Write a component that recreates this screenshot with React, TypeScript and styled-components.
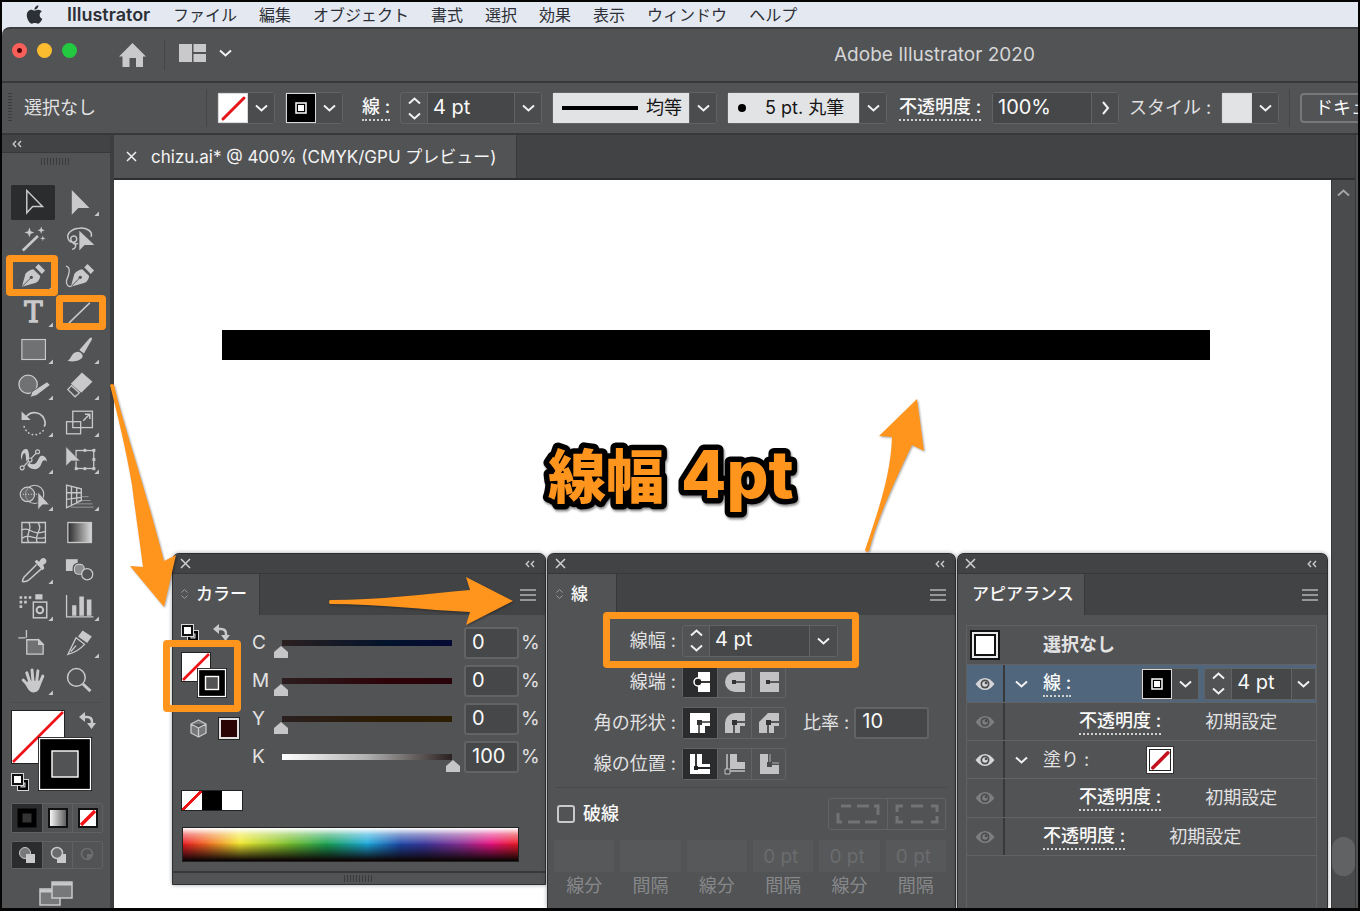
import React from "react";
import styled, { createGlobalStyle } from "styled-components";
import { FaApple } from "react-icons/fa";

const c = {
  base: "#525355",
  dark: "#424345",
  line: "#37383a",
  edge: "#626365",
  field: "#464749",
  icon: "#c9c9cb",
  text: "#e2e2e3",
  white: "#fafafa",
  orange: "#ff951d",
  pressed: "#2b2c2e",
};

const ui = '"Inter", "Noto Sans CJK JP", sans-serif';

const GlobalStyle = createGlobalStyle`
  * { box-sizing: border-box; }
  body { margin: 0; background: #050505; }
  button, input, select { font: inherit; color: inherit; margin: 0; padding: 0; border: 0; background: none; border-radius: 0; }
  svg { display: block; flex: none; }
  ul { list-style: none; margin: 0; padding: 0; }
`;

/* ---------- frame, menu bar and title bar ---------- */

const Frame = styled.div`
  min-height: 100vh;
  border: 2px solid #050505;
  border-bottom-width: 3px;
  display: flex;
  flex-direction: column;
  position: relative;
  overflow: hidden;
  background: #e4e9f1;
  font-family: ${ui};
  font-size: 18px;
  line-height: 24px;
  color: ${c.text};
`;

const MenuBar = styled.nav`
  height: 25px;
  flex: none;
  display: flex;
  align-items: center;
  gap: 22px;
  padding-left: 22px;
  color: #2c2f36;
  font-size: 16px;
  line-height: 24px;
  white-space: nowrap;
`;

const MenuItem = styled.button`
  flex: none;
`;

const AppName = styled.button`
  flex: none;
  width: 84px;
  text-align: left;
  font-size: 18px;
  font-weight: 600;
`;

const AppWindow = styled.div`
  flex: 1;
  display: flex;
  flex-direction: column;
  min-width: 0;
  background: ${c.base};
  border-top: 2px solid #3b3d40;
  border-radius: 8px 0 0 0;
`;

const TitleBar = styled.header`
  height: 54px;
  flex: none;
  display: flex;
  align-items: center;
  border-bottom: 2px solid ${c.line};
  padding-left: 10px;
  overflow: hidden;
`;

const Lights = styled.div`
  display: flex;
  gap: 10px;
  margin-bottom: 10px;
`;

const Light = styled.button<{ $color: string; $dot?: boolean }>`
  width: 15px;
  height: 15px;
  border-radius: 50%;
  background: ${(p) => (p.$dot ? `radial-gradient(circle, #4d0505 2px, ${p.$color} 3px)` : p.$color)};
`;

const HomeButton = styled.button`
  margin-left: 42px;
`;

const BarDivider = styled.span<{ $h: number }>`
  flex: none;
  width: 1px;
  height: ${(p) => p.$h}px;
  background: #444547;
`;

const LayoutButton = styled.button`
  display: flex;
  align-items: center;
  gap: 13px;
  margin: 0 0 4px 14px;
`;

const AppTitle = styled.h1`
  margin: 0 0 0 602px;
  font-size: 19px;
  line-height: 24px;
  font-weight: 400;
  color: #d6d6d7;
  white-space: nowrap;
`;

/* ---------- control bar ---------- */

const ControlBar = styled.div`
  height: 52px;
  flex: none;
  display: flex;
  align-items: center;
  gap: 10px;
  padding-left: 6px;
  border-bottom: 2px solid ${c.line};
  overflow: hidden;
  white-space: nowrap;
  & > * { flex: none; }
`;

const Selection = styled.span`
  width: 174px;
  padding-left: 2px;
`;

const SideGrip = styled.span`
  width: 4px;
  height: 30px;
  background: repeating-linear-gradient(to bottom, #3a3b3d 0 1px, transparent 1px 3px);
`;

const Label = styled.label<{ $w?: number; $pad?: number; $link?: boolean }>`
  width: ${(p) => (p.$w ? `${p.$w}px` : "auto")};
  padding-left: ${(p) => p.$pad ?? 0}px;
  font-weight: ${(p) => (p.$link ? 500 : 400)};
  color: ${(p) => (p.$link ? c.white : c.text)};
`;

const Dotted = styled.span`
  display: inline-block;
  border-bottom: 2px dotted #d0d0d1;
  white-space: nowrap;
  line-height: 24px;
  font-weight: 500;
  color: ${c.white};
`;

const Group = styled.div<{ $bare?: boolean }>`
  display: flex;
  height: 32px;
  border: 1px solid ${(p) => (p.$bare ? "transparent" : c.edge)};
  border-radius: 3px;
  background: ${c.base};
  & > * + * { border-left: 1px solid ${c.edge}; }
`;

const StepColumn = styled.div`
  width: 26px;
  display: flex;
  flex-direction: column;
`;

const StepButton = styled.button`
  flex: 1;
  display: grid;
  place-items: center;
`;

const ValueInput = styled.input<{ $w: number; $pad?: number }>`
  width: ${(p) => p.$w}px;
  padding: 0 0 3px ${(p) => p.$pad ?? 5}px;
  background: ${c.field};
  color: ${c.white};
  font-size: 20px;
  outline: 0;
`;

const BoxInput = styled(ValueInput)`
  height: 32px;
  border: 2px solid ${c.edge};
  border-radius: 3px;
`;

const Arrow = styled.button<{ $w?: number }>`
  width: ${(p) => p.$w ?? 28}px;
  display: grid;
  place-items: center;
  background: #4b4c4e;
`;

const SwatchGroup = styled.div`
  display: flex;
  height: 32px;
  border: 1px solid ${c.edge};
  border-radius: 3px;
`;

const Swatch = styled.button<{ $color: string }>`
  width: 30px;
  height: 30px;
  display: grid;
  place-items: center;
  border: 1px solid #d8d8da;
  background: ${(p) => p.$color};
`;

const LightField = styled.div<{ $w: number }>`
  width: ${(p) => p.$w}px;
  display: flex;
  align-items: center;
  background: #e2e3e5;
  color: #161616;
  padding-left: 9px;
`;

const PlainSelect = styled.select<{ $pad: number }>`
  appearance: none;
  flex: 1;
  min-width: 0;
  height: 30px;
  padding-left: ${(p) => p.$pad}px;
  outline: 0;
`;

const SetupButton = styled.button`
  height: 30px;
  width: 170px;
  padding-left: 13px;
  text-align: left;
  border: 2px solid #77787a;
  border-radius: 4px;
  color: ${c.white};
`;

/* ---------- work area ---------- */

const Workspace = styled.div`
  flex: 1;
  display: flex;
  min-height: 0;
`;

const ToolBar = styled.aside`
  width: 112px;
  flex: none;
  border-right: 4px solid #3d3e40;
  display: flex;
  flex-direction: column;
  align-items: flex-start;
`;

const ToolHead = styled.div`
  align-self: stretch;
  height: 18px;
  display: flex;
  align-items: center;
  padding-left: 10px;
  background: ${c.dark};
  border-bottom: 1px solid ${c.line};
`;

const Grip = styled.span`
  width: 30px;
  height: 7px;
  background: repeating-linear-gradient(to right, #3a3b3d 0 1px, transparent 1px 3px);
`;

const ToolGrip = styled.div`
  padding: 5px 0 19px 39px;
  display: flex;
`;

const ToolGrid = styled.div`
  margin-left: 8px;
  height: 515px;
  display: grid;
  grid-template-columns: 46px 46px;
  grid-template-rows: repeat(14, 1fr);
`;

const Tool = styled.button<{ $active?: boolean }>`
  position: relative;
  width: 46px;
  min-height: 0;
  border-radius: 5px;
  background: ${(p) => (p.$active ? `linear-gradient(${c.pressed}, ${c.pressed}) center / 44px 35px no-repeat` : "none")};
`;

const Highlight = styled.span<{ $inset: string }>`
  position: absolute;
  inset: ${(p) => p.$inset};
  border: 7px solid ${c.orange};
  border-radius: 4px;
  pointer-events: none;
`;

const ToolRule = styled.div`
  width: 92px;
  height: 1px;
  margin: 3px 0 7px 8px;
  background: #4b4c4e;
`;

const ToolSwatches = styled.div`
  margin-left: 9px;
  height: 82px;
`;

const ModeGroup = styled.div<{ $h: number; $mt: number }>`
  margin: ${(p) => p.$mt}px 0 0 9px;
  display: flex;
  height: ${(p) => p.$h}px;
  border: 1px solid #606163;
  border-radius: 2px;
  & > * + * { border-left: 1px solid #606163; }
`;

const ModeButton = styled.button<{ $active?: boolean }>`
  width: 30px;
  display: grid;
  place-items: center;
  background: ${(p) => (p.$active ? c.pressed : "none")};
`;

const ScreenMode = styled.button`
  margin: 12px 0 0 37px;
`;

const DocumentArea = styled.main`
  flex: 1;
  min-width: 0;
  display: flex;
  flex-direction: column;
`;

const TabStrip = styled.div`
  height: 45px;
  flex: none;
  display: flex;
  background: ${c.dark};
  border-bottom: 2px solid #2d2e30;
`;

const DocTab = styled.div`
  width: 403px;
  display: flex;
  align-items: center;
  gap: 14px;
  padding-left: 12px;
  background: ${c.base};
  border-right: 1px solid ${c.line};
  color: #f4f4f4;
  font-size: 17px;
  white-space: nowrap;
`;

const CanvasRow = styled.div`
  flex: 1;
  display: flex;
  min-height: 0;
`;

const Canvas = styled.div`
  flex: 1;
  min-width: 0;
  position: relative;
  overflow: hidden;
  background: #fff;
`;

const StrokeSample = styled.div`
  height: 30px;
  margin: 150px 121px 0 108px;
  background: #000;
`;

/* Lettering with a heavy rounded outline. */
const Caption = styled.svg`
  margin: 74px 0 0 424px;
  font-weight: 900;
  fill: ${c.orange};
  stroke: #000;
  stroke-width: 11px;
  stroke-linejoin: round;
  paint-order: stroke fill;
  filter: drop-shadow(1px 2px 1px rgba(0, 0, 0, 0.45));
`;

const ScrollTrack = styled.div`
  width: 24px;
  flex: none;
  background: #4a4b4d;
  border-left: 1px solid ${c.line};
  display: flex;
  flex-direction: column;
  justify-content: space-between;
  align-items: center;
  padding: 9px 0 32px;
`;

const ScrollThumb = styled.div`
  width: 23px;
  height: 39px;
  border-radius: 12px;
  background: #616264;
`;

const RightEdge = styled.div`
  width: 3px;
  flex: none;
  background: ${c.base};
  border-left: 1px solid ${c.line};
`;

/* ---------- floating panels ---------- */

const PanelDock = styled.div`
  position: absolute;
  left: 58px;
  top: 373px;
  bottom: 0;
  display: flex;
  gap: 1px;
`;

const PanelFrame = styled.section<{ $w: number; $h?: number }>`
  width: ${(p) => p.$w}px;
  height: ${(p) => (p.$h ? `${p.$h}px` : "auto")};
  display: flex;
  flex-direction: column;
  border: 1px solid #2e2f31;
  border-bottom-width: ${(p) => (p.$h ? 1 : 0)}px;
  border-radius: 7px 7px 0 0;
  background: ${c.base};
  box-shadow: 0 0 4px rgba(0, 0, 0, 0.35);
`;

const PanelHead = styled.div`
  height: 20px;
  flex: none;
  display: flex;
  align-items: center;
  justify-content: space-between;
  padding: 0 10px 0 7px;
  background: ${c.dark};
  border-bottom: 1px solid ${c.line};
  border-radius: 6px 6px 0 0;
`;

const PanelTabs = styled.div`
  height: 41px;
  flex: none;
  display: flex;
  justify-content: space-between;
  background: ${c.dark};
  padding-right: 9px;
`;

const PanelTab = styled.button<{ $w: number }>`
  width: ${(p) => p.$w}px;
  display: flex;
  align-items: center;
  gap: 7px;
  padding: 0 0 2px 7px;
  background: ${c.base};
  border-right: 1px solid ${c.line};
  color: ${c.white};
  font-size: 17px;
  font-weight: 500;
  white-space: nowrap;
`;

const MenuButton = styled.button`
  align-self: center;
`;

function Panel(p: { w: number; h?: number; title: string; tab: number; spinner?: boolean; children: React.ReactNode }) {
  return (
    <PanelFrame $w={p.w} $h={p.h} aria-label={p.title}>
      <PanelHead>
        <button aria-label="閉じる"><Cross size={11} color="#cfcfd0" /></button>
        <button aria-label="折りたたむ"><Collapse /></button>
      </PanelHead>
      <PanelTabs>
        <PanelTab $w={p.tab}>
          {p.spinner ? (
            <svg width="9" height="12" viewBox="0 0 9 12" fill="none" stroke="#9b9b9d">
              <path d="M1.5 4.5 4.5 1.5 7.5 4.5M1.5 7.5l3 3 3-3" />
            </svg>
          ) : <span />}
          {p.title}
        </PanelTab>
        <MenuButton aria-label="メニュー">
          <svg width="16" height="12" stroke="#b4b4b6" strokeWidth="1.5"><path d="M0 1h16M0 6h16M0 11h16" /></svg>
        </MenuButton>
      </PanelTabs>
      {p.children}
    </PanelFrame>
  );
}

/* Colour panel */

const ColorBody = styled.div`
  position: relative;
  flex: 1;
  padding: 9px 0 0 8px;
`;

const ColorTop = styled.div`
  display: flex;
`;

const ColorSide = styled.div`
  width: 71px;
  flex: none;
`;

const IconPair = styled.div<{ $h: number; $mt: number; $gap: number; $pad: number }>`
  display: flex;
  align-items: center;
  height: ${(p) => p.$h}px;
  margin-top: ${(p) => p.$mt}px;
  gap: ${(p) => p.$gap}px;
  padding-left: ${(p) => p.$pad}px;
`;

const Proxy = styled.div`
  position: relative;
  width: 46px;
  height: 46px;
  margin-top: 11px;
`;

const Gamut = styled.button`
  width: 20px;
  height: 21px;
  background: #2a0304;
  border: 2px solid #e0e0e0;
  outline: 1px solid #222;
`;

const Channel = styled.div`
  height: 38px;
  display: grid;
  grid-template-columns: 22px 186px 54px 18px;
  column-gap: 0;
  align-items: center;
  font-size: 19px;
`;

const ChannelInput = styled(BoxInput)`
  margin-left: 4px;
  width: 55px;
`;

const Percent = styled.span`
  margin-left: 7px;
`;

const Range = styled.input<{ $track: string }>`
  appearance: none;
  align-self: start;
  width: 186px;
  height: 19px;
  margin-top: 15px;
  background: linear-gradient(to right, ${(p) => p.$track}) no-repeat 8px 1px / 170px 6px;
  outline: 0;
  &::-webkit-slider-runnable-track { height: 19px; }
  &::-webkit-slider-thumb {
    appearance: none;
    width: 14px;
    height: 12px;
    margin-top: 7px;
    background: #c6c6c8;
    clip-path: polygon(50% 0, 100% 50%, 100% 100%, 0 100%, 0 50%);
  }
`;

const QuickColors = styled.div`
  margin-top: 14px;
  width: 62px;
  height: 21px;
  display: flex;
  border: 1px solid #222;
`;

const Quick = styled.button<{ $bg: string }>`
  flex: 1;
  background: ${(p) => p.$bg};
`;

const noneFill = "linear-gradient(to bottom right, #fff 45%, #e11 45%, #e11 55%, #fff 55%)";

const Spectrum = styled.div`
  margin: 16px 0 0 1px;
  width: 337px;
  height: 35px;
  border: 1px solid #222;
  background:
    linear-gradient(to bottom, #fff 0%, rgba(255, 255, 255, 0.45) 20%, transparent 50%),
    linear-gradient(to top, #0d0505 2%, rgba(10, 5, 10, 0.5) 28%, transparent 55%),
    linear-gradient(to right, #ea1a24 0%, #f26a22 7%, #f2e82e 17%, #74bd2c 32%, #1aa254 43%, #1ca9dc 55%, #1f48a8 65%, #3a379c 72%, #8b2f95 83%, #e8127f 92%, #ea1a2c 99%);
`;

const PanelFoot = styled.div`
  height: 13px;
  flex: none;
  display: grid;
  place-items: center;
  border-top: 2px solid ${c.line};
`;

const channels = [
  { name: "C", value: 0, track: "#2b201f, #03132b 60%, #040a33" },
  { name: "M", value: 0, track: "#2b1d1e, #2d0308 60%, #29030a" },
  { name: "Y", value: 0, track: "#2b1f1f, #2b1c03 60%, #2b1e03" },
  { name: "K", value: 100, track: "#ffffff, #b0b0b0 50%, #2a2120" },
];

/* Stroke panel */

const StrokeRow = styled.div`
  height: 41px;
  display: flex;
  align-items: center;
  &:first-child { margin-top: 5px; }
`;

const RowLabel = styled.span`
  width: 128px;
  margin-right: 6px;
  text-align: right;
  white-space: nowrap;
`;

const Highlighted = styled.div`
  position: absolute;
  left: 55px;
  top: -3px;
  width: 256px;
  height: 56px;
  border: 7px solid ${c.orange};
  border-radius: 4px;
  pointer-events: none;
`;

const StrokeBody = styled.div`
  position: relative;
  display: flex;
  flex-direction: column;
`;

const Choice = styled.button<{ $active?: boolean }>`
  width: 34px;
  display: grid;
  place-items: center;
  color: ${(p) => (p.$active ? "#fff" : "#c2c2c4")};
  background: ${(p) => (p.$active ? c.pressed : "none")};
`;

const Ratio = styled.label`
  display: flex;
  align-items: center;
  gap: 5px;
  margin-left: 17px;
  white-space: nowrap;
`;

const Rule = styled.div`
  height: 1px;
  margin: 3px 8px 0;
  background: #48494b;
`;

const DashHead = styled.div`
  display: flex;
  align-items: center;
  justify-content: space-between;
  margin-top: 10px;
  padding: 0 9px;
`;

const CheckLabel = styled.label`
  display: flex;
  align-items: center;
  gap: 8px;
  color: ${c.white};
  font-weight: 500;
`;

const Check = styled.input`
  appearance: none;
  width: 18px;
  height: 18px;
  border: 2px solid #c9c9cb;
  border-radius: 3px;
`;

const DashButton = styled.button`
  width: 58px;
  display: grid;
  place-items: center;
`;

const DashGrid = styled.div`
  display: grid;
  grid-template-columns: repeat(6, 1fr);
  gap: 6px;
  padding: 10px 9px 0 6px;
`;

const DashField = styled.label`
  display: flex;
  flex-direction: column;
  align-items: center;
  gap: 2px;
  color: #87888a;
`;

const DashInput = styled.input`
  width: 100%;
  height: 32px;
  padding-right: 15px;
  text-align: right;
  background: #57585a;
  color: #6b6c6e;
  font-size: 19px;
`;

/* Appearance panel */

const AppearanceList = styled.ul`
  flex: 1;
  margin: 10px 10px 0 8px;
  border: 1px solid #606163;
  border-bottom: 0;
`;

const AppearanceRow = styled.li<{ $selected?: boolean; $tall?: boolean }>`
  height: ${(p) => (p.$tall ? 39 : 38)}px;
  display: flex;
  align-items: center;
  border-bottom: 1px solid #626365;
  background: ${(p) => (p.$selected ? "#4f667d" : "none")};
  white-space: nowrap;
  overflow: hidden;
  & > * { flex: none; }
`;

const EyeCell = styled.button<{ $dim?: boolean }>`
  width: 38px;
  height: 100%;
  display: grid;
  place-items: center;
  border-right: 2px solid #38393b;
  color: ${(p) => (p.$dim ? "#7d7e80" : "#d6d6d8")};
`;

const ThumbCell = styled.span`
  width: 38px;
  padding-left: 3px;
`;

const ThumbBox = styled.span`
  display: block;
  width: 30px;
  height: 30px;
  background: #fff;
  border: 2px solid #111;
  box-shadow: inset 0 0 0 2px #e8e8e8, inset 0 0 0 4px #111;
`;

const Indent = styled.span<{ $w: number }>`
  width: ${(p) => p.$w}px;
`;

const Strong = styled.span`
  margin-left: 38px;
  font-weight: 700;
`;

const Twist = styled.button`
  width: 38px;
  padding-left: 10px;
`;

const Inline = styled.div<{ $ml: number }>`
  display: flex;
  margin-left: ${(p) => p.$ml}px;
`;

const NoneBox = styled.button`
  width: 26px;
  height: 26px;
  display: grid;
  place-items: center;
  background: #fff;
  border: 2px solid #fff;
  outline: 1px solid #333;
  box-shadow: inset 0 0 0 1px #222;
`;

const Value = styled.span<{ $ml: number }>`
  margin-left: ${(p) => p.$ml}px;
`;

const ArrowMark = styled.svg<{ $x: number; $y: number }>`
  position: absolute;
  left: ${(p) => p.$x}px;
  top: ${(p) => p.$y}px;
  overflow: visible;
  pointer-events: none;
  fill: ${c.orange};
  filter: drop-shadow(1px 1px 1px rgba(0, 0, 0, 0.35));
`;

const ColorHighlight = styled.div`
  position: absolute;
  left: -10px;
  top: 25px;
  width: 78px;
  height: 72px;
  border: 7px solid ${c.orange};
  border-radius: 4px;
  pointer-events: none;
`;

/* ---------- small drawings ---------- */

function Chevron({ dir = "down", color = "#f2f2f2" }: { dir?: "down" | "up" | "right"; color?: string }) {
  const d = { down: "M1 1.5 6.5 6.5 12 1.5", up: "M1 6.5 6.5 1.5 12 6.5", right: "M4 -2 9 4 4 10" }[dir];
  return (
    <svg width="13" height="8" viewBox="0 0 13 8" fill="none" stroke={color} strokeWidth="2" overflow="visible">
      <path d={d} />
    </svg>
  );
}

function Cross({ size, color }: { size: number; color: string }) {
  return (
    <svg width={size} height={size} viewBox="0 0 11 11" stroke={color} strokeWidth="1.5">
      <path d="M1 1 10 10M10 1 1 10" />
    </svg>
  );
}

function Collapse() {
  return (
    <svg width="10" height="8" viewBox="0 0 10 8" fill="none" stroke="#c9c9cb" strokeWidth="1.4">
      <path d="M4 1 1.200 4 4 7M9 1 6.200 4 9 7" />
    </svg>
  );
}

function NoneMark({ size = 28, color = "#e5141b", width = 3 }: { size?: number; color?: string; width?: number }) {
  return (
    <svg width={size} height={size} viewBox="0 0 28 28" stroke={color} strokeWidth={width} strokeLinecap="round">
      <path d="M4 25 25 4" />
    </svg>
  );
}

function TargetMark() {
  return (
    <svg width="12" height="12" viewBox="0 0 12 12">
      <rect x="1" y="1" width="10" height="10" fill="#000" stroke="#fff" strokeWidth="1.5" />
      <rect x="3" y="3" width="6" height="6" fill="#fff" />
    </svg>
  );
}

function DefaultIcon() {
  return (
    <svg width="18" height="18" viewBox="0 0 18 18">
      <rect x="6.500" y="6.500" width="11" height="11" fill="#000" stroke="#d6d6d8" />
      <rect x="10" y="10" width="4" height="4" fill={c.base} stroke="#d6d6d8" />
      <rect x="0.500" y="0.500" width="12" height="12" fill="#fff" stroke="#d6d6d8" />
      <rect x="2" y="2" width="9" height="9" fill="#fff" stroke="#111" strokeWidth="2" />
    </svg>
  );
}

function SwapIcon() {
  return (
    <svg width="17" height="17" viewBox="0 0 17 17">
      <path d="M4 5h4q5 0 5 5v2" fill="none" stroke={c.icon} strokeWidth="2.500" />
      <path d="M0 5 6 0v10zM8 11h9l-4.500 6z" fill={c.icon} />
    </svg>
  );
}

function FillStroke({ size, box, offset }: { size: number; box: number; offset: number }) {
  const inner = box > 40 ? 26 : 13;
  const o = offset + (box - inner) / 2;
  return (
    <svg width={size} height={size} viewBox={`0 0 ${size} ${size}`}>
      <rect x="0.500" y="0.500" width={box - 1} height={box - 1} fill="#fff" stroke="#222" />
      <path d={`M2 ${box - 2} ${box - 2} 2`} stroke="#f01216" strokeWidth="2.600" />
      <rect x={offset} y={offset} width={box} height={box} fill="#111" />
      <rect x={offset + 1.5} y={offset + 1.5} width={box - 3} height={box - 3} fill="#000" stroke="#fff" strokeWidth="1.300" />
      <rect x={o} y={o} width={inner} height={inner} fill={c.base} stroke="#fff" strokeWidth="1.400" />
    </svg>
  );
}

function Eye() {
  return (
    <svg width="20" height="14" viewBox="0 0 20 14">
      <path d="M0.500 7Q5 1 10 1t9.500 6Q15 13 10 13T0.500 7Z" fill="currentColor" />
      <circle cx="10" cy="7" r="4.500" fill="#4b4c4e" />
      <circle cx="10" cy="7" r="2.800" fill="currentColor" />
      <circle cx="11" cy="6" r="1.300" fill="#4b4c4e" />
    </svg>
  );
}

const corner = <path d="M130 84v14h-14z" fill={c.icon} stroke="none" />;
const nib = (
  <g>
    <path d="M35 88 46 48Q56 36 70 34L91 55Q90 68 78 76Z" fill={c.icon} stroke="none" />
    <path d="M76 28 86 18 106 38 96 49Z" fill={c.icon} stroke="none" />
    <path d="M36 87 62 61" stroke={c.base} strokeWidth="3" />
    <circle cx="64" cy="59" r="5" fill={c.base} stroke="none" />
  </g>
);

/* Each tool is drawn on a 138 x 110 grid. */
const tools: { name: string; art: React.ReactNode; mark?: string; active?: boolean }[] = [
  { name: "選択", active: true, art: <path d="M50 20v68l18-19h30z" strokeWidth="4.500" /> },
  { name: "ダイレクト選択", art: <><path d="M47 18v76l20-21h34z" fill={c.icon} stroke="none" />{corner}</> },
  {
    name: "自動選択",
    art: (
      <>
        <path d="M38 90 84 46" strokeWidth="8" />
        <g fill={c.icon} stroke="none">
          <path d="M58 20l4 11 11 4-11 4-4 11-4-11-11-4 11-4z" />
          <path d="M94 17l3 8 8 3-8 3-3 8-3-8-8-3 8-3z" />
          <path d="M99 44l2 7 7 2-7 2-2 7-2-7-7-2 7-2z" />
        </g>
      </>
    ),
  },
  {
    name: "なげなわ",
    art: (
      <>
        <path d="M106 48C112 30 90 20 70 22 46 23 30 40 36 54c6 16 26 12 26 0s-20-10-18 2 14 18 22 12M56 66c6 10 2 20-8 20" strokeWidth="4.500" />
        <path d="M70 30v60l16-17h30z" fill={c.icon} stroke="none" />
      </>
    ),
  },
  { name: "ペン", mark: "-3px -2px -2px -4px", art: <>{nib}{corner}</> },
  { name: "曲線", art: <><g transform="translate(9 0)">{nib}</g><path d="M29 25C46 28 38 52 31 68c-3 14 6 22 15 18" strokeWidth="4" /></> },
  {
    name: "文字",
    art: (
      <>
        <text x="70" y="84" textAnchor="middle" fontFamily="DejaVu Serif, serif" fontSize="84" fill={c.icon} strokeWidth="4">T</text>
        {corner}
      </>
    ),
  },
  { name: "直線", mark: "1px -4px 1px 0", art: <path d="M38 86 102 24" strokeWidth="4.500" /> },
  { name: "長方形", art: <><rect x="35" y="23" width="72" height="61" fill="#707173" />{corner}</> },
  {
    name: "ブラシ",
    art: (
      <g fill={c.icon} stroke="none">
        <path d="M102 18q9-4 6 6L84 66 70 55Z" />
        <path d="M66 60q16 4 14 16c-6 14-30 16-46 12 14-8 10-26 32-28Z" />
        {corner}
      </g>
    ),
  },
  {
    name: "Shaper",
    art: (
      <>
        <circle cx="54" cy="50" r="28" fill="#707173" strokeWidth="4" />
        <path d="M112 42l10 10-42 32-20 6 6-18z" fill={c.icon} stroke={c.base} strokeWidth="3" />
        {corner}
      </>
    ),
  },
  {
    name: "消しゴム",
    art: (
      <>
        <path d="M78 14 110 42 76 76 44 48Z" fill={c.icon} stroke="none" />
        <path d="M46 54 35 66 57 88 70 76Z" strokeWidth="4" />
        {corner}
      </>
    ),
  },
  {
    name: "回転",
    art: (
      <>
        <path d="M48 36C66 14 100 22 106 52q1 8-3 14" strokeWidth="5" />
        <path d="M42 66C50 94 84 100 102 76" strokeWidth="5" strokeDasharray="1 11" strokeLinecap="round" />
        <path d="M34 20v26h28z" fill={c.icon} stroke="none" />
        {corner}
      </>
    ),
  },
  {
    name: "拡大・縮小",
    art: (
      <>
        <rect x="50" y="19" width="60" height="50" strokeWidth="4" />
        <rect x="31" y="51" width="43" height="37" fill={c.base} strokeWidth="4" />
        <path d="M50 51v18h24" strokeWidth="4" />
        <path d="M82 48 100 30M87 28h15v15" strokeWidth="4.500" />
        {corner}
      </>
    ),
  },
  {
    name: "線幅",
    art: (
      <>
        <path d="M34 56C26 26 48 14 54 26c8 20-4 42 14 42 18 0 16-26 28-26 10 0 14 8 16 18-8-8-14-4-18 8-6 18-24 18-36 10C44 66 50 38 44 34c-6 0-8 8-10 22Z" fill={c.icon} stroke="none" />
        <path d="M36 79 82 31" stroke={c.base} strokeWidth="9" />
        <path d="M36 79 82 31" strokeWidth="4" />
        <g fill={c.base}>
          <circle cx="36" cy="79" r="6" /><circle cx="60" cy="55" r="6" /><circle cx="83" cy="30" r="6" />
        </g>
        {corner}
      </>
    ),
  },
  {
    name: "自由変形",
    art: (
      <>
        <rect x="60" y="26" width="54" height="55" strokeWidth="4" />
        <g fill={c.icon} stroke="none">
          <rect x="83" y="21" width="8" height="9" /><rect x="110" y="21" width="9" height="9" />
          <rect x="110" y="49" width="9" height="9" /><rect x="110" y="77" width="9" height="9" />
          <rect x="83" y="77" width="8" height="9" /><rect x="56" y="77" width="9" height="9" />
        </g>
        <path d="M29 14v60l16-16h28z" fill={c.icon} stroke={c.base} strokeWidth="2" />
        {corner}
      </>
    ),
  },
  {
    name: "シェイプ形成",
    art: (
      <>
        <circle cx="74" cy="47" r="28" />
        <circle cx="52" cy="47" r="22" fill="#707173" fillOpacity="0.600" />
        <path d="M38 47h44" strokeDasharray="3 5" />
        <path d="M84 40v54l14-15h21z" fill={c.icon} stroke={c.base} strokeWidth="2" />
        {corner}
      </>
    ),
  },
  {
    name: "遠近グリッド",
    art: (
      <>
        <path d="M31 19 76 30v36L31 88ZM46 23v56M62 27v46M31 42l45 0M31 62l45-6" strokeWidth="4" />
        <path d="M78 54h20M66 66h38M56 76h54M44 86h70" strokeWidth="2.500" opacity="0.700" />
        {corner}
      </>
    ),
  },
  {
    name: "メッシュ",
    art: (
      <path d="M35 23h72v61H35zM35 46c22-14 30 20 72 4M35 72c24-20 34 8 72-4M56 23c14 20-14 38 0 61M84 23c18 22-14 36-2 61" strokeWidth="4" />
    ),
  },
  {
    name: "グラデーション",
    art: (
      <>
        <defs><linearGradient id="toolGradient"><stop offset="0" stopColor="#2b2b2b" /><stop offset="1" stopColor="#d9d9d9" /></linearGradient></defs>
        <rect x="35" y="23" width="72" height="61" fill="url(#toolGradient)" strokeWidth="4" />
      </>
    ),
  },
  {
    name: "スポイト",
    art: (
      <>
        <path d="M80 38 42 76q-8 14-3 15 12 0 18-6L96 50" strokeWidth="4.500" />
        <path d="M74 30l6-6 8 6c4-10 14-16 20-8 6 8-2 14-8 18l4 10-6 6z" fill={c.icon} stroke="none" />
        {corner}
      </>
    ),
  },
  {
    name: "ブレンド",
    art: (
      <>
        <rect x="29" y="22" width="36" height="36" fill={c.icon} stroke="none" />
        <rect x="53" y="36" width="34" height="34" rx="13" fill="#8c8d8f" stroke={c.base} strokeWidth="7" />
        <rect x="55" y="38" width="30" height="30" rx="12" fill="#8c8d8f" />
        <circle cx="94" cy="68" r="17" fill={c.base} strokeWidth="4" />
      </>
    ),
  },
  {
    name: "シンボルスプレー",
    art: (
      <>
        <g fill={c.icon} stroke="none">
          <path d="M28 22h8v8h-8zM42 22h8v8h-8zM56 22h8v8h-8zM28 36h8v8h-8zM42 36h8v8h-8zM28 50h8v8h-8z" />
          <path d="M76 16h22v16H76z" />
        </g>
        <rect x="70" y="40" width="41" height="48" strokeWidth="4.500" />
        <circle cx="90" cy="64" r="10" strokeWidth="6" />
        {corner}
      </>
    ),
  },
  {
    name: "棒グラフ",
    art: (
      <>
        <path d="M31 18v67h82" strokeWidth="4" />
        <path d="M48 50h13v32H48zM70 23h14v59H70zM93 32h14v50H93z" fill={c.icon} stroke="none" />
        {corner}
      </>
    ),
  },
  {
    name: "アートボード",
    art: (
      <>
        <path d="M50 42h36l14 14v30H50z" fill="#707173" strokeWidth="4" />
        <path d="M86 42v14h14z" fill={c.icon} />
        <path d="M49 12v24M24 36h22" strokeWidth="4" />
      </>
    ),
  },
  {
    name: "スライス",
    art: (
      <>
        <path d="M35 87 60 36 86 56Q66 78 35 87ZM44 78 60 60" strokeWidth="4" />
        <path d="M80 14l28 18-14 20-28-20z" fill={c.icon} stroke="none" />
        {corner}
      </>
    ),
  },
  {
    name: "手のひら",
    art: (
      <>
        <path d="M39 52 56 70M50 30 60 60M66 21 69 58M84 24 80 58M99 40 88 66" strokeWidth="9" strokeLinecap="round" />
        <path d="M54 54h36l2 14c-4 16-10 22-22 22S54 80 46 66Z" fill={c.icon} stroke="none" />
        {corner}
      </>
    ),
  },
  {
    name: "ズーム",
    art: <><circle cx="61" cy="44" r="27" strokeWidth="4.500" /><path d="M81 64 104 86" strokeWidth="9" /></>,
  },
];

const capIcons = [
  <><path d="M10 1h12v20H10z" fill="currentColor" /><circle cx="10" cy="11" r="4" fill="#222" stroke="currentColor" strokeWidth="1.500" /><path d="M8 11h14" stroke="#222" strokeWidth="1.800" /><path d="M8 9h4v4H8z" fill="#222" /></>,
  <><path d="M22 1v20H12a10 10 0 0 1 0-20z" fill="currentColor" /><path d="M11 11h11" stroke="#333" strokeWidth="1.500" /><path d="M9 9h4v4H9z" fill="#333" /></>,
  <><path d="M3 1h19v20H3z" fill="currentColor" /><path d="M11 11h11" stroke="#333" strokeWidth="1.500" /><path d="M9 9h4v4H9z" fill="#333" /></>,
];

const joinInner = (
  <>
    <path d="M11 21V10h11" stroke="#333" strokeWidth="1.500" fill="none" />
    <path d="M9 8h5v5H9z" fill="#333" />
  </>
);
const joinIcons = [
  <><path d="M2 1h20v13h-5v7H2z" fill="currentColor" />{joinInner}</>,
  <><path d="M12 1h10v13h-5v7H2V11A10 10 0 0 1 12 1z" fill="currentColor" />{joinInner}</>,
  <><path d="M11 1h11v13h-5v7H2V10z" fill="currentColor" />{joinInner}</>,
];

const alignIcons = [
  <><path d="M2 1h12v10h8v10H2z" fill="currentColor" /><path d="M8 1v14h14" stroke="#222" strokeWidth="1.800" fill="none" /><path d="M6 13h4v4H6z" fill="#222" /></>,
  <><path d="M7 1h7v8h8v7H7z" fill="currentColor" /><path d="M4 1v17h18" stroke="currentColor" strokeWidth="1.500" fill="none" /><path d="M2 16h5v5H2z" fill="#4b4c4e" stroke="currentColor" /></>,
  <><path d="M3 1h8v11h11v9H3z" fill="currentColor" /><path d="M13 1v9h9" stroke="#8f9092" strokeWidth="1.500" fill="none" /><path d="M10 9h5v5h-5z" fill="#4b4c4e" /></>,
];

function ChoiceGroup({ name, icons }: { name: string; icons: React.ReactNode[] }) {
  return (
    <Group role="group" aria-label={name}>
      {icons.map((icon, i) => (
        <Choice key={i} $active={i === 0} aria-label={`${name} ${i + 1}`}>
          <svg width="24" height="22" viewBox="0 0 24 22">{icon}</svg>
        </Choice>
      ))}
    </Group>
  );
}

function Stepper() {
  return (
    <StepColumn>
      <StepButton aria-label="増やす"><Chevron dir="up" /></StepButton>
      <StepButton aria-label="減らす"><Chevron /></StepButton>
    </StepColumn>
  );
}

function ColorSwatch({ label, color, children }: { label: string; color: string; children?: React.ReactNode }) {
  return (
    <SwatchGroup>
      <Swatch $color={color} aria-label={label}>{children}</Swatch>
      <Arrow $w={26} aria-label={`${label}を選ぶ`}><Chevron /></Arrow>
    </SwatchGroup>
  );
}

const menus = ["ファイル", "編集", "オブジェクト", "書式", "選択", "効果", "表示", "ウィンドウ", "ヘルプ"];
const dashes = [["線分", ""], ["間隔", ""], ["線分", ""], ["間隔", "0 pt"], ["線分", "0 pt"], ["間隔", "0 pt"]];

function ToolPalette() {
  return (
    <ToolBar>
      <ToolHead><button aria-label="折りたたむ"><Collapse /></button></ToolHead>
      <ToolGrip><Grip /></ToolGrip>
      <ToolGrid>
        {tools.map((t) => (
          <Tool key={t.name} $active={t.active} aria-label={t.name}>
            <svg width="46" height="36" viewBox="0 0 138 110" fill="none" stroke={c.icon} strokeWidth="3.500">{t.art}</svg>
            {t.mark && <Highlight $inset={t.mark} />}
          </Tool>
        ))}
      </ToolGrid>
      <ToolRule />
      <ToolSwatches>
        <svg width="88" height="82" viewBox="0 0 88 82">
          <g transform="translate(68 2)"><SwapIcon /></g>
          <g><FillStroke size={82} box={54} offset={27} /></g>
          <g transform="translate(0 63)"><DefaultIcon /></g>
        </svg>
      </ToolSwatches>
      <ModeGroup $h={30} $mt={11}>
        <ModeButton $active aria-label="カラー">
          <svg width="20" height="20"><rect x="3" y="3" width="14" height="14" fill="#333" stroke="#000" strokeWidth="5" /></svg>
        </ModeButton>
        <ModeButton aria-label="グラデーション">
          <svg width="20" height="20">
            <defs><linearGradient id="modeGradient"><stop offset="0" stopColor="#fff" /><stop offset="1" stopColor="#555" /></linearGradient></defs>
            <rect x="1" y="1" width="18" height="18" fill="url(#modeGradient)" stroke="#111" strokeWidth="2" />
          </svg>
        </ModeButton>
        <ModeButton aria-label="なし">
          <svg width="20" height="20"><rect x="1" y="1" width="18" height="18" fill="#fff" stroke="#111" strokeWidth="2" /><path d="M3 17 17 3" stroke="#f01216" strokeWidth="3.500" /></svg>
        </ModeButton>
      </ModeGroup>
      <ModeGroup $h={28} $mt={8}>
        <ModeButton $active aria-label="標準描画">
          <svg width="18" height="18"><circle cx="7" cy="7" r="5.500" fill="#77787a" stroke={c.icon} /><path d="M8 8h9v9H8z" fill={c.icon} /></svg>
        </ModeButton>
        <ModeButton aria-label="背面描画">
          <svg width="18" height="18"><path d="M8 8h9v9H8z" fill={c.icon} /><circle cx="8" cy="7" r="5.500" fill="#6a6b6d" stroke={c.icon} strokeWidth="1.500" /></svg>
        </ModeButton>
        <ModeButton aria-label="内側描画">
          <svg width="18" height="18"><circle cx="8" cy="8" r="5.500" fill="none" stroke="#6d6e70" strokeWidth="1.500" /><path d="M8 8h5v2l-3 3H8z" fill="#6d6e70" /></svg>
        </ModeButton>
      </ModeGroup>
      <ScreenMode aria-label="スクリーンモード">
        <svg width="34" height="25" viewBox="0 0 34 25" stroke={c.icon} strokeWidth="1.500">
          <rect x="1" y="8" width="20" height="16" fill="#77787a" /><path d="M1 10h20" strokeWidth="3" />
          <rect x="13" y="1" width="20" height="16" fill="#77787a" /><path d="M13 3h20" strokeWidth="3" />
        </svg>
      </ScreenMode>
    </ToolBar>
  );
}

function ColorPanel() {
  return (
    <Panel w={374} h={332} title="カラー" tab={87} spinner>
      <ColorBody>
        <ColorTop>
          <ColorSide>
            <IconPair $h={17} $mt={0} $gap={14} $pad={0}><DefaultIcon /><SwapIcon /></IconPair>
            <Proxy><FillStroke size={46} box={30} offset={16} /></Proxy>
            <IconPair $h={21} $mt={20} $gap={12} $pad={9}>
              <svg width="17" height="19" viewBox="0 0 17 19" fill="#77787a" stroke={c.icon} strokeWidth="1.300" strokeLinejoin="round">
                <path d="M8.500 1 16 5v9l-7.500 4L1 14V5zM1 5l7.500 4L16 5M8.500 9v9" />
              </svg>
              <Gamut aria-label="色域内カラー" />
            </IconPair>
          </ColorSide>
          <div>
            {channels.map((ch) => (
              <Channel key={ch.name}>
                <label htmlFor={`ch-${ch.name}`}>{ch.name}</label>
                <Range id={`ch-${ch.name}`} type="range" min={0} max={100} defaultValue={ch.value} $track={ch.track} />
                <ChannelInput $w={55} $pad={6} aria-label={`${ch.name} 値`} defaultValue={ch.value} />
                <Percent>%</Percent>
              </Channel>
            ))}
          </div>
        </ColorTop>
        <QuickColors>
          <Quick $bg={noneFill} aria-label="なし" /><Quick $bg="#000" aria-label="黒" /><Quick $bg="#fff" aria-label="白" />
        </QuickColors>
        <Spectrum />
        <ColorHighlight />
      </ColorBody>
      <PanelFoot><Grip /></PanelFoot>
    </Panel>
  );
}

function StrokePanel() {
  return (
    <Panel w={409} title="線" tab={69} spinner>
      <StrokeBody>
        <StrokeRow>
          <RowLabel>線幅 :</RowLabel>
          <Group>
            <Stepper />
            <ValueInput $w={100} aria-label="線幅" defaultValue="4 pt" />
            <Arrow aria-label="線幅を選ぶ"><Chevron /></Arrow>
          </Group>
        </StrokeRow>
        <StrokeRow><RowLabel>線端 :</RowLabel><ChoiceGroup name="線端" icons={capIcons} /></StrokeRow>
        <StrokeRow>
          <RowLabel>角の形状 :</RowLabel><ChoiceGroup name="角の形状" icons={joinIcons} />
          <Ratio>比率 :<BoxInput $w={75} $pad={6} defaultValue="10" /></Ratio>
        </StrokeRow>
        <StrokeRow><RowLabel>線の位置 :</RowLabel><ChoiceGroup name="線の位置" icons={alignIcons} /></StrokeRow>
        <Rule />
        <DashHead>
          <CheckLabel><Check type="checkbox" />破線</CheckLabel>
          <Group>
            <DashButton aria-label="線分と間隔を保持">
              <svg width="44" height="20" fill="none" stroke="#727375" strokeWidth="3"><path d="M5 2h10M21 2h12M38 2h4v9M2 9v9h4M12 18h12M29 18h12" /></svg>
            </DashButton>
            <DashButton aria-label="コーナーに整列">
              <svg width="44" height="20" fill="none" stroke="#727375" strokeWidth="3"><path d="M8 2H2v6M2 12v6h6M16 2h12M16 18h12M36 2h6v6M42 12v6h-6" /></svg>
            </DashButton>
          </Group>
        </DashHead>
        <DashGrid>
          {dashes.map(([name, value], i) => (
            <DashField key={i}><DashInput disabled defaultValue={value} />{name}</DashField>
          ))}
        </DashGrid>
        <Highlighted />
      </StrokeBody>
    </Panel>
  );
}

function AppearancePanel() {
  return (
    <Panel w={371} title="アピアランス" tab={127}>
      <AppearanceList>
        <AppearanceRow $tall><ThumbCell><ThumbBox /></ThumbCell><Strong>選択なし</Strong></AppearanceRow>
        <AppearanceRow $selected>
          <EyeCell aria-label="表示"><Eye /></EyeCell>
          <Twist aria-label="開閉"><Chevron /></Twist>
          <Dotted>線 :</Dotted>
          <Inline $ml={70}><ColorSwatch label="線の色" color="#000"><TargetMark /></ColorSwatch></Inline>
          <Inline $ml={5}>
            <Group>
              <Stepper />
              <ValueInput $w={60} aria-label="線の太さ" defaultValue="4 pt" />
              <Arrow $w={24} aria-label="太さを選ぶ"><Chevron /></Arrow>
            </Group>
          </Inline>
        </AppearanceRow>
        <AppearanceRow>
          <EyeCell $dim aria-label="表示"><Eye /></EyeCell><Indent $w={74} />
          <Dotted>不透明度 :</Dotted><Value $ml={44}>初期設定</Value>
        </AppearanceRow>
        <AppearanceRow>
          <EyeCell aria-label="表示"><Eye /></EyeCell>
          <Twist aria-label="開閉"><Chevron /></Twist>
          塗り :
          <Inline $ml={58}><NoneBox aria-label="塗りなし"><NoneMark size={20} color="#c4101c" width={5} /></NoneBox></Inline>
        </AppearanceRow>
        <AppearanceRow $tall>
          <EyeCell $dim aria-label="表示"><Eye /></EyeCell><Indent $w={74} />
          <Dotted>不透明度 :</Dotted><Value $ml={44}>初期設定</Value>
        </AppearanceRow>
        <AppearanceRow>
          <EyeCell $dim aria-label="表示"><Eye /></EyeCell><Indent $w={38} />
          <Dotted>不透明度 :</Dotted><Value $ml={44}>初期設定</Value>
        </AppearanceRow>
      </AppearanceList>
    </Panel>
  );
}

export default function App() {
  return (
    <Frame>
      <GlobalStyle />
      <MenuBar>
        <FaApple size={21} />
        <AppName>Illustrator</AppName>
        {menus.map((m) => <MenuItem key={m}>{m}</MenuItem>)}
      </MenuBar>
      <AppWindow>
        <TitleBar>
          <Lights>
            <Light $color="#f9605a" $dot aria-label="閉じる" />
            <Light $color="#fcbc30" aria-label="しまう" />
            <Light $color="#23c940" aria-label="拡大" />
          </Lights>
          <HomeButton aria-label="ホーム">
            <svg width="27" height="24" viewBox="0 0 27 24" fill={c.icon}><path d="M13.500 0 27 13.500H24V24H17V15H10.500V24H3.500V13.500H0z" /></svg>
          </HomeButton>
          <Indent $w={18} />
          <BarDivider $h={30} />
          <LayoutButton aria-label="ワークスペース">
            <svg width="27" height="18" fill={c.icon}><path d="M0 0h13v18H0zM14.500 0H27v8H14.500zM14.500 10H27v8H14.500z" /></svg>
            <Chevron />
          </LayoutButton>
          <AppTitle>Adobe Illustrator 2020</AppTitle>
        </TitleBar>
        <ControlBar>
          <SideGrip />
          <Selection>選択なし</Selection>
          <BarDivider $h={38} />
          <ColorSwatch label="塗り" color="#fff"><NoneMark /></ColorSwatch>
          <ColorSwatch label="線" color="#000"><TargetMark /></ColorSwatch>
          <Label htmlFor="weight" $w={37} $pad={9} $link><Dotted>線 :</Dotted></Label>
          <Group>
            <Stepper />
            <ValueInput id="weight" $w={87} defaultValue="4 pt" />
            <Arrow $w={27} aria-label="線幅を選ぶ"><Chevron /></Arrow>
          </Group>
          <Group>
            <LightField $w={136}>
              <svg width="76" height="4"><rect width="76" height="4" fill="#000" /></svg>
              <PlainSelect $pad={8} aria-label="可変線幅プロファイル"><option>均等</option></PlainSelect>
            </LightField>
            <Arrow $w={27} aria-label="プロファイルを選ぶ"><Chevron /></Arrow>
          </Group>
          <Group>
            <LightField $w={131}>
              <svg width="10" height="10"><circle cx="5" cy="5" r="4" fill="#000" /></svg>
              <PlainSelect $pad={18} aria-label="ブラシ定義"><option>5 pt. 丸筆</option></PlainSelect>
            </LightField>
            <Arrow $w={27} aria-label="ブラシを選ぶ"><Chevron /></Arrow>
          </Group>
          <Label htmlFor="opacity" $w={85} $pad={2} $link><Dotted>不透明度 :</Dotted></Label>
          <Group>
            <ValueInput id="opacity" $w={98} defaultValue="100%" />
            <Arrow $w={27} aria-label="不透明度を選ぶ"><Chevron dir="right" /></Arrow>
          </Group>
          <Label $w={82}>スタイル :</Label>
          <ColorSwatch label="グラフィックスタイル" color="#e2e3e5" />
          <BarDivider $h={38} />
          <SetupButton>ドキュメント設定</SetupButton>
        </ControlBar>
        <Workspace>
          <ToolPalette />
          <DocumentArea>
            <TabStrip>
              <DocTab>
                <button aria-label="閉じる"><Cross size={11} color="#f0f0f0" /></button>
                chizu.ai* @ 400% (CMYK/GPU プレビュー)
              </DocTab>
            </TabStrip>
            <CanvasRow>
              <Canvas>
                <StrokeSample />
                <Caption width="280" height="90" viewBox="0 0 280 90">
                  <text x="10" y="64" fontSize="58" fontFamily="Noto Sans CJK JP, sans-serif">線幅</text>
                  <text x="143" y="64" fontSize="66" fontFamily="Inter, sans-serif" fontWeight="800">4pt</text>
                </Caption>
                <PanelDock>
                  <ColorPanel />
                  <StrokePanel />
                  <AppearancePanel />
                </PanelDock>
              </Canvas>
              <ScrollTrack>
                <Chevron dir="up" color="#a5a5a7" />
                <ScrollThumb />
              </ScrollTrack>
            </CanvasRow>
          </DocumentArea>
          <RightEdge />
        </Workspace>
      </AppWindow>
      <ArrowMark $x={108} $y={381} width="68" height="226">
        <path d="M0 2Q2 0 4 2C14 44 34 100 54 178L66 172 54 224 20 183 33 184C30 160 26 134 22 102 16 66 8 34 0 2Z" />
      </ArrowMark>
      <ArrowMark $x={863} $y={397} width="60" height="154">
        <path d="M0 151Q1 154 4 152C12 122 24 94 47 46L59 52 52 0 14 37 27 38C26 74 14 110 0 151Z" />
      </ArrowMark>
      <ArrowMark $x={327} $y={575} width="186" height="48">
        <path d="M1 23Q-1 25 1 27C50 27 96 33 141 35L137 48 184 24 137 0 141 13C96 17 50 23 1 23Z" />
      </ArrowMark>
    </Frame>
  );
}
